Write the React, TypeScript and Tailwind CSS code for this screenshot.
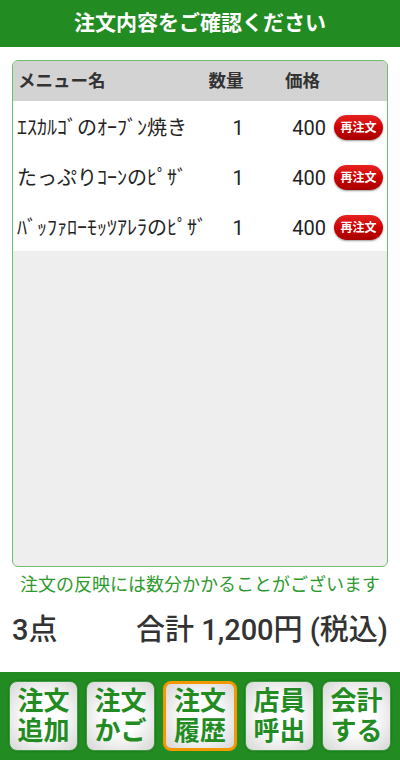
import React from "react";

const items = [
  { name: "ｴｽｶﾙｺﾞのｵｰﾌﾞﾝ焼き", qty: 1, price: 400 },
  { name: "たっぷりｺｰﾝのﾋﾟｻﾞ", qty: 1, price: 400 },
  { name: "ﾊﾞｯﾌｧﾛｰﾓｯﾂｱﾚﾗのﾋﾟｻﾞ", qty: 1, price: 400 },
];

const navs = [
  { top: "注文", bottom: "追加" },
  { top: "注文", bottom: "かご" },
  { top: "注文", bottom: "履歴", active: true },
  { top: "店員", bottom: "呼出" },
  { top: "会計", bottom: "する" },
];

export default function App() {
  return (
    <div className="flex h-[760px] w-[400px] flex-col bg-white font-['Roboto','Noto_Sans_CJK_JP',sans-serif] text-[#333]">
      <div className="flex h-[47px] items-center justify-center bg-[#228b22]">
        <span className="text-[21px] font-bold text-white">注文内容をご確認ください</span>
      </div>

      <div className="mx-3 mt-[13px] flex h-[507px] flex-col overflow-hidden rounded-md border border-[#6cbf6c] bg-[#eeeeee]">
        <div className="flex h-[40px] shrink-0 items-center bg-[#d3d3d3] text-[17.5px] font-bold text-[#333]">
          <div className="flex-1 pl-[5px]">メニュー名</div>
          <div className="w-[50px] text-center">数量</div>
          <div className="ml-[34px] w-[102px]">価格</div>
        </div>
        {items.map((it) => (
          <div key={it.name} className="flex h-[50px] shrink-0 items-center bg-white pt-[3px] text-[20px] text-[#222]">
            <div className="flex-1 truncate pl-[4px]">{it.name}</div>
            <div className="w-[50px] text-center">{it.qty}</div>
            <div className="w-[63px] text-right">{it.price}</div>
            <button className="ml-[8px] mr-[4px] flex h-[25px] w-[49px] items-center justify-center rounded-full bg-gradient-to-b from-[#e82020] via-[#cc0000] to-[#a80000] text-[12px] font-bold text-white shadow-[0_1px_2px_rgba(0,0,0,0.4)]">
              再注文
            </button>
          </div>
        ))}
      </div>

      <div className="mt-[4px] whitespace-nowrap text-center text-[18px] text-[#2e9a2e]">注文の反映には数分かかることがございます</div>

      <div className="mt-[11px] flex items-center justify-between px-[12px] text-[29px] text-[#333]">
        <span className="font-medium">3点</span>
        <span className="font-medium">合計 1,200円 (税込)</span>
      </div>

      <div className="mt-auto flex h-[88px] items-center justify-between bg-[#228b22] px-[9px]">
        {navs.map((n, i) => (
          <div
            key={i}
            className={
              n.active
                ? "flex h-[70px] w-[74px] flex-col items-center justify-center rounded-lg border-[3px] border-[#f39800] bg-[radial-gradient(circle,#ffffff_35%,#d6d6d6_100%)] text-[26px] font-bold leading-[30px] text-[#228b22]"
                : "flex h-[70px] w-[69px] flex-col items-center justify-center rounded-lg border border-[#3f9b3f] bg-[radial-gradient(circle,#ffffff_35%,#d6d6d6_100%)] text-[26px] font-bold leading-[30px] text-[#228b22] shadow-[0_0_2px_rgba(0,0,0,0.3)]"
            }
          >
            <span>{n.top}</span>
            <span>{n.bottom}</span>
          </div>
        ))}
      </div>
    </div>
  );
}
